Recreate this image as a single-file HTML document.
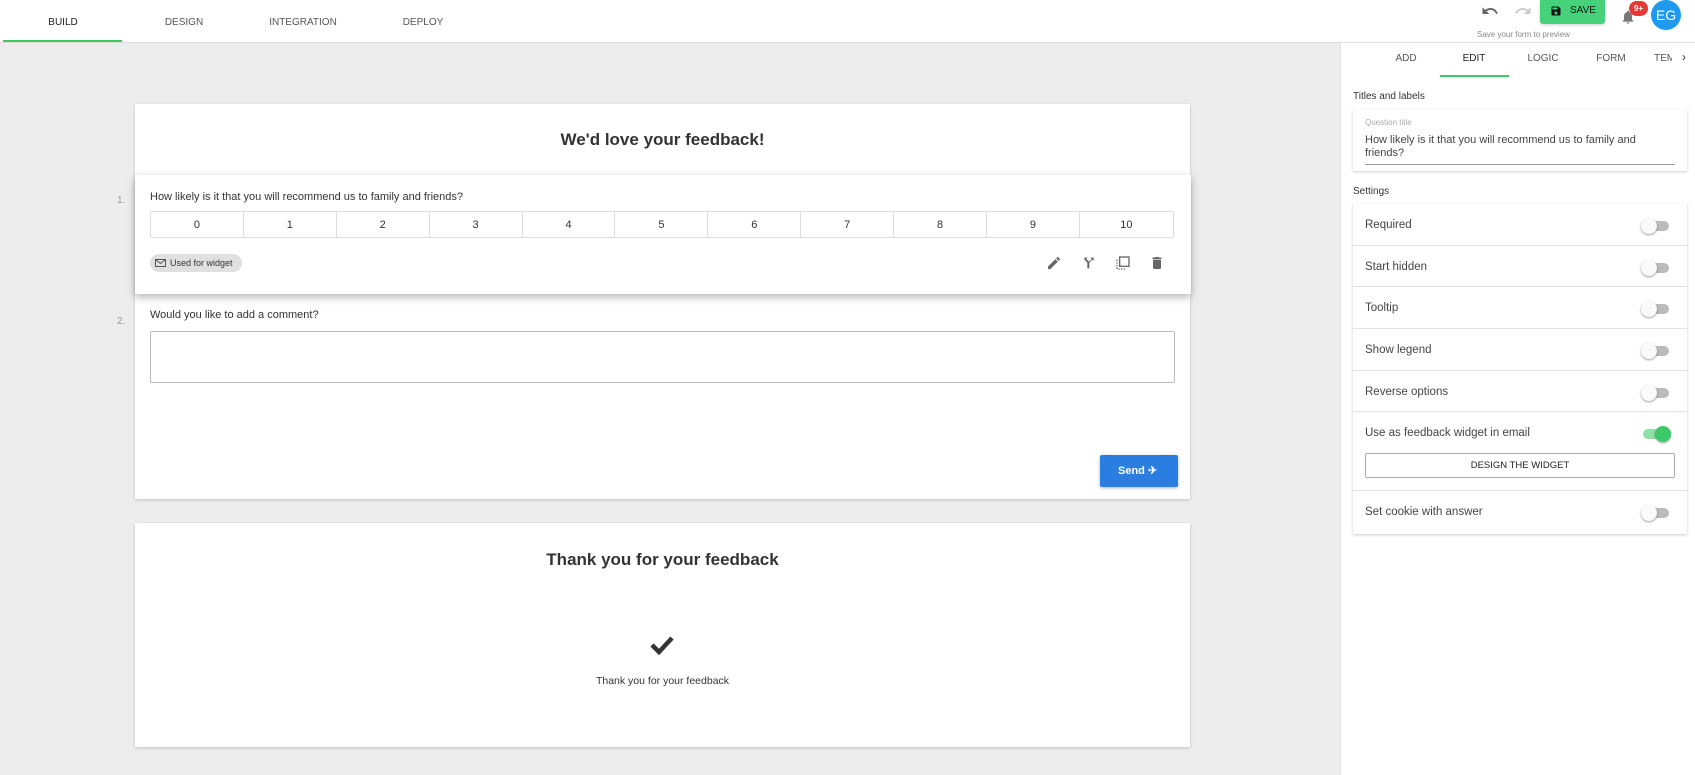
<!DOCTYPE html>
<html><head><style>
*{box-sizing:border-box;margin:0;padding:0}
body{width:1695px;height:775px;overflow:hidden;background:#ededed;font-family:"Liberation Sans",sans-serif;color:#333;position:relative}
.abs{position:absolute}
.top{left:0;top:0;width:1695px;height:43px;background:#fff;border-bottom:1px solid #ddd}
.tab{font-size:10px;color:#555;top:17px;transform:translateX(-50%)}
.panel{left:1340px;top:43px;width:355px;height:732px;background:#fff;border-left:1px solid #ddd}
.card{background:#fff;box-shadow:0 1px 3px rgba(0,0,0,.2)}
.cell{float:left;height:100%;border-right:1px solid #ddd;text-align:center;line-height:26px;font-size:11px}
.row{height:41.7px;border-bottom:1px solid #e2e2e2;font-size:11.5px;padding-left:12px;line-height:43px;position:relative;color:#444}
.tg{position:absolute;right:18px;top:17px;width:26px;height:10px;border-radius:5px;background:#bbb}
.tg:after{content:"";position:absolute;left:-2px;top:-3px;width:16px;height:16px;border-radius:50%;background:#fafafa;box-shadow:0 1px 2px rgba(0,0,0,.4)}
.tg.on{background:#8ee0a6}.tg.on:after{left:12px;background:#3dc86a}
</style></head><body>
<div class="abs top"></div>
<div class="abs" style="left:3px;top:40px;width:119px;height:2px;background:#3dc86a"></div>
<div class="abs tab" style="left:63px;color:#222">BUILD</div>
<div class="abs tab" style="left:184px">DESIGN</div>
<div class="abs tab" style="left:303px">INTEGRATION</div>
<div class="abs tab" style="left:423px">DEPLOY</div>
<svg class="abs" style="left:1481px;top:4px" width="18" height="14" viewBox="0 0 24 18"><path d="M12.5 5c-2.6 0-5 1-6.9 2.6L2 4v9h9L7.4 9.4C8.8 8.2 10.6 7.5 12.5 7.5c3.5 0 6.5 2.3 7.6 5.5l2.4-.8C21.1 8 17.1 5 12.5 5z" fill="#666"/></svg>
<svg class="abs" style="left:1514px;top:4px" width="18" height="14" viewBox="0 0 24 18"><path d="M11.5 5c2.6 0 5 1 6.9 2.6L22 4v9h-9l3.6-3.6C15.2 8.2 13.4 7.5 11.5 7.5c-3.5 0-6.5 2.3-7.6 5.5L1.5 12.2C2.900 8 6.900 5 11.5 5z" fill="#ccc"/></svg>
<div class="abs" style="left:1540px;top:0;width:65px;height:24px;background:#45d27a;border-radius:0 0 3px 3px;box-shadow:0 1px 3px rgba(0,0,0,.2);font-size:10px;color:#111;line-height:22px;padding-left:30px">SAVE</div>
<svg class="abs" style="left:1550px;top:5px" width="12" height="12" viewBox="0 0 24 24"><path d="M17 3H5c-1.1 0-2 .9-2 2v14c0 1.1.9 2 2 2h14c1.1 0 2-.9 2-2V7l-4-4zm-5 16c-1.7 0-3-1.3-3-3s1.3-3 3-3 3 1.3 3 3-1.3 3-3 3zm3-10H5V5h10v4z" fill="#111"/></svg>
<div class="abs" style="left:1477px;top:30px;font-size:8px;color:#888">Save your form to preview</div>
<svg class="abs" style="left:1620px;top:8px" width="16" height="18" viewBox="0 0 24 24"><path d="M12 22c1.1 0 2-.9 2-2h-4c0 1.1.9 2 2 2zm6-6v-5c0-3.1-1.6-5.6-4.5-6.3V4c0-.8-.7-1.500-1.5-1.5s-1.5.7-1.5 1.5v.7C7.6 5.4 6 7.9 6 11v5l-2 2v1h16v-1l-2-2z" fill="#777"/></svg>
<div class="abs" style="left:1629px;top:1px;width:19px;height:15px;border-radius:8px;background:#e53935;color:#fff;font-size:8px;text-align:center;line-height:15px;font-weight:bold">9+</div>
<div class="abs" style="left:1651px;top:0;width:30px;height:30px;border-radius:50%;background:#1e9bf0;color:#fff;font-size:14px;text-align:center;line-height:30px">EG</div>

<div class="abs panel"></div>
<div class="abs tab" style="left:1406px;top:53px">ADD</div>
<div class="abs tab" style="left:1474px;top:53px;color:#222">EDIT</div>
<div class="abs tab" style="left:1543px;top:53px">LOGIC</div>
<div class="abs tab" style="left:1611px;top:53px">FORM</div>
<div class="abs" style="left:1654px;top:53px;font-size:10px;color:#555;width:18px;overflow:hidden;white-space:nowrap">TEMPLATES</div>
<div class="abs" style="left:1682px;top:50px;font-size:12px;color:#333">›</div>
<div class="abs" style="left:1440px;top:75px;width:69px;height:2px;background:#3dc86a"></div>
<div class="abs" style="left:1353px;top:91px;font-size:10px;color:#333">Titles and labels</div>
<div class="abs card" style="left:1353px;top:109px;width:334px;height:62px">
<div style="position:absolute;left:12px;top:9px;font-size:8px;color:#aaa">Question title</div>
<div style="position:absolute;left:12px;top:25px;width:285px;font-size:11px;color:#444;line-height:13px">How likely is it that you will recommend us to family and friends?</div>
<div style="position:absolute;left:12px;top:55px;width:310px;height:1px;background:#999"></div></div>
<div class="abs" style="left:1353px;top:186px;font-size:10px;color:#333">Settings</div>
<div class="abs card" style="left:1353px;top:204px;width:334px;height:330px">
<div class="row">Required<span class="tg"></span></div>
<div class="row">Start hidden<span class="tg"></span></div>
<div class="row">Tooltip<span class="tg"></span></div>
<div class="row">Show legend<span class="tg"></span></div>
<div class="row">Reverse options<span class="tg"></span></div>
<div class="row" style="height:79px;line-height:42px">Use as feedback widget in email<span class="tg on"></span>
<div style="position:absolute;left:12px;top:41px;width:310px;height:25px;border:1px solid #aaa;border-radius:2px;font-size:9.5px;line-height:23px;text-align:center;color:#222">DESIGN THE WIDGET</div></div>
<div class="row" style="border:none">Set cookie with answer<span class="tg"></span></div>
</div>

<div class="abs card" style="left:135px;top:104px;width:1055px;height:395px">
<div style="position:absolute;width:100%;top:26px;text-align:center;font-size:17px;font-weight:bold;color:#333">We'd love your feedback!</div>
<div style="position:absolute;left:15px;top:205px;font-size:11px;color:#333">Would you like to add a comment?</div>
<div style="position:absolute;left:15px;top:227px;width:1025px;height:52px;border:1px solid #bbb;border-radius:2px"></div>
<div style="position:absolute;left:965px;top:351px;width:78px;height:32px;background:#2a7de1;border-radius:2px;box-shadow:0 1px 3px rgba(0,0,0,.3);color:#fff;font-size:11px;font-weight:bold;line-height:32px;padding-left:18px">Send ✈</div>
</div>
<div class="abs" style="left:117px;top:195px;font-size:10px;color:#999">1.</div>
<div class="abs" style="left:117px;top:316px;font-size:10px;color:#999">2.</div>
<div class="abs" style="left:135px;top:175px;width:1056px;height:119px;background:#fff;box-shadow:0 3px 8px rgba(0,0,0,.3)">
<div style="position:absolute;left:15px;top:16px;font-size:11px;color:#333">How likely is it that you will recommend us to family and friends?</div>
<div style="position:absolute;left:15px;top:36px;width:1024px;height:27px;border:1px solid #ddd;border-radius:2px">
<div class="cell" style="width:9.09%">0</div><div class="cell" style="width:9.09%">1</div><div class="cell" style="width:9.09%">2</div><div class="cell" style="width:9.09%">3</div><div class="cell" style="width:9.09%">4</div><div class="cell" style="width:9.09%">5</div><div class="cell" style="width:9.09%">6</div><div class="cell" style="width:9.09%">7</div><div class="cell" style="width:9.09%">8</div><div class="cell" style="width:9.09%">9</div><div class="cell" style="width:9.09%;border:none">10</div></div>
<div style="position:absolute;left:15px;top:79px;width:92px;height:18px;border-radius:9px;background:#e0e0e0;font-size:9px;line-height:18px;padding-left:20px;color:#333">Used for widget</div>
<svg style="position:absolute;left:20px;top:84px" width="11" height="8" viewBox="0 0 11 8"><rect x=".5" y=".5" width="10" height="7" fill="none" stroke="#555"/><path d="M.5 .5l5 4 5-4" fill="none" stroke="#555"/></svg>
<svg style="position:absolute;left:911px;top:80px" width="16" height="16" viewBox="0 0 24 24"><path d="M3 17.25V21h3.75L17.8 9.9l-3.7-3.7L3 17.25zM20.7 7c.4-.4.4-1 0-1.4l-2.3-2.3c-.4-.4-1-.4-1.4 0l-1.8 1.8 3.7 3.7L20.7 7z" fill="#666"/></svg>
<svg style="position:absolute;left:946px;top:80px" width="16" height="16" viewBox="0 0 24 24"><path d="M5 4h5L8 6l4 4 4-4-2-2h5v5l-2-2-4.5 4.5V20h-3v-8.5L5 7v-3z" fill="#666"/></svg>
<svg style="position:absolute;left:980px;top:80px" width="16" height="16" viewBox="0 0 24 24"><rect x="7" y="3" width="14" height="14" fill="none" stroke="#666" stroke-width="2"/><path d="M3 7v14h14" fill="none" stroke="#666" stroke-width="2" stroke-dasharray="2 2"/></svg>
<svg style="position:absolute;left:1014px;top:80px" width="16" height="16" viewBox="0 0 24 24"><path d="M6 19c0 1.1.9 2 2 2h8c1.1 0 2-.9 2-2V7H6v12zM19 4h-3.5l-1-1h-5l-1 1H5v2h14V4z" fill="#666"/></svg>
</div>

<div class="abs card" style="left:135px;top:523px;width:1055px;height:224px">
<div style="position:absolute;width:100%;top:27px;text-align:center;font-size:17px;font-weight:bold;color:#333">Thank you for your feedback</div>
<svg style="position:absolute;left:515px;top:112px" width="24" height="20" viewBox="0 0 24 20"><path d="M2 10l7 7L22 3" fill="none" stroke="#333" stroke-width="4.5"/></svg>
<div style="position:absolute;width:100%;top:152px;text-align:center;font-size:10.5px;color:#333">Thank you for your feedback</div>
</div>
</body></html>
